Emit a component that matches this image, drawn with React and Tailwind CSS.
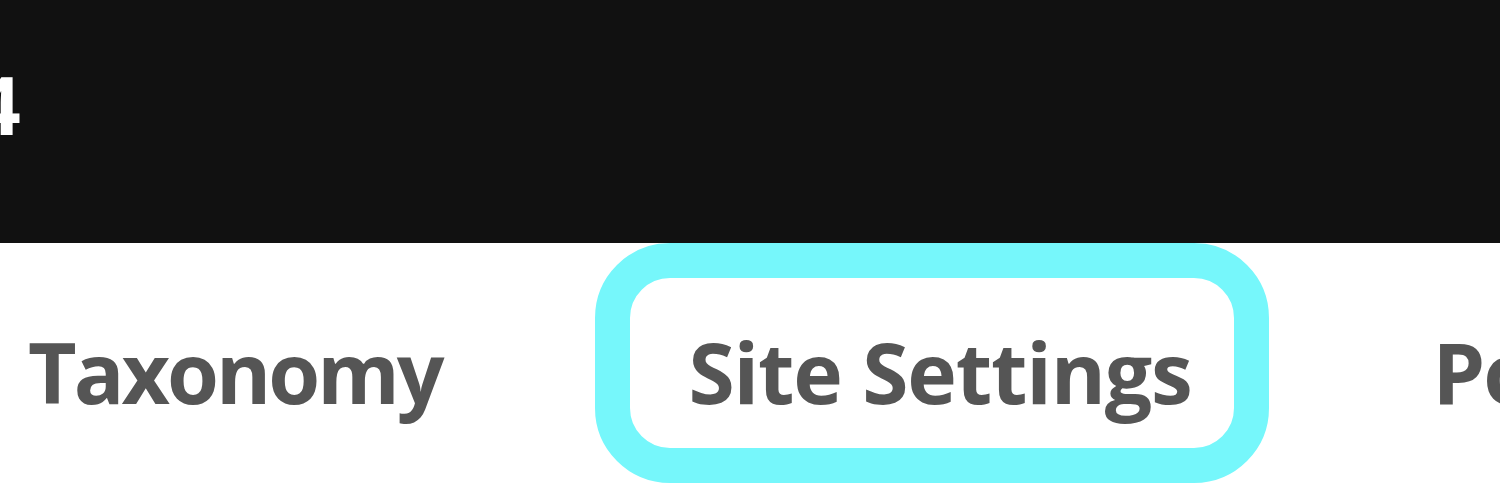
import React from "react";

const App = () => {
  return (
    <div className="w-[1500px] h-[500px] overflow-hidden bg-white font-['Open_Sans',sans-serif]">
      <header className="h-[243px] bg-[#111111] flex items-center">
        <span className="-ml-[25px] mb-[35px] text-[80px] font-bold leading-none text-white">4</span>
      </header>
      <nav className="flex items-start pt-[35px] whitespace-nowrap text-[84px] font-bold leading-none text-[#555555]">
        <span className="ml-[28px] pt-[52px] tracking-[-3px]">Taxonomy</span>
        <button className="ml-[189px] pl-[58px] pr-[42px] pt-[52px] h-[170px] flex items-start rounded-[40px] outline-[35px] outline-solid outline-[#76f7fb] bg-white text-[#555555] font-bold tracking-[-1.2px]">
          Site Settings
        </button>
        <span className="ml-[199px] pt-[52px] tracking-[-2px]">Posts</span>
      </nav>
    </div>
  );
};

export default App;
